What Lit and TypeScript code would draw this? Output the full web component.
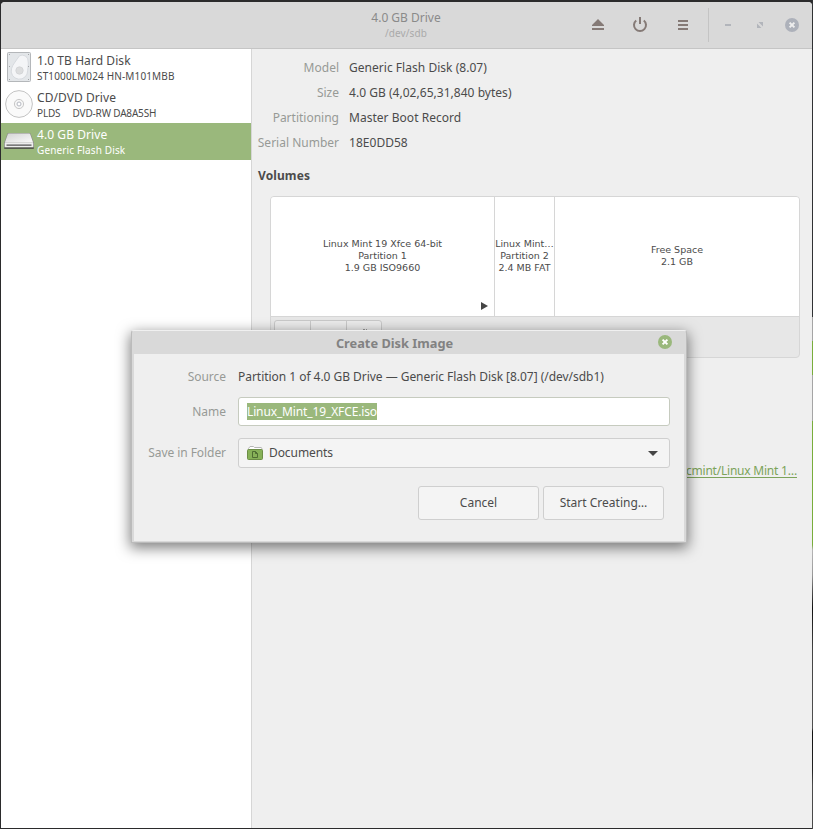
import { LitElement, html, css, svg } from "lit";
import { customElement } from "lit/decorators.js";

const hardDisk = svg`<svg width="36" height="37" viewBox="0 0 36 37">
  <rect x="6.5" y="3.5" width="23" height="29" rx="1" fill="#e3e6e9" stroke="#b4b7ba"/>
  <path d="M18.500 6.800Q21 5.300 24.500 7Q27.500 9 27.300 14Q27.200 18 26.600 21.500A8.200 8.200 0 1 1 10.600 19.500Q11.500 16.500 13.500 13.800Z" fill="#f4f5f7" stroke="#d0d4d9" stroke-width=".8"/>
  <circle cx="18.500" cy="21.500" r="3.700" fill="#dcddde" stroke="#d0d2d4" stroke-width=".8"/>
  <g fill="#a2a5a8"><rect x="8" y="5" width="1" height="1"/><rect x="27" y="5" width="1" height="1"/><rect x="8" y="17" width="1" height="1"/><rect x="27" y="17" width="1" height="1"/><rect x="8" y="30" width="1" height="1"/><rect x="27" y="30" width="1" height="1"/></g>
</svg>`;

const disc = svg`<svg width="36" height="37" viewBox="0 0 36 37">
  <circle cx="18" cy="18" r="13.400" fill="#fafafa" stroke="#c4c4c4"/>
  <circle cx="18" cy="18" r="4.600" fill="#f6f6f6" stroke="#c8c8c8"/>
  <circle cx="18" cy="18" r="2" fill="#fff" stroke="#b5b9c2"/>
</svg>`;

const usbDrive = svg`<svg width="36" height="37" viewBox="0 0 36 37">
  <defs><linearGradient id="lid" x1="0" y1="0" x2="1" y2="1"><stop offset="0" stop-color="#d4d4d4"/><stop offset="1" stop-color="#fafafa"/></linearGradient></defs>
  <path d="M3 19.500h30v5.500q0 1-1 1H4q-1 0-1-1z" fill="#55594f"/>
  <path d="M7.500 10h21q1 0 1.300 1L33 20v4q0 .8-.8.800H3.800Q3 24.800 3 24v-4l3.200-9q.3-1 1.300-1z" fill="#8b8d87"/>
  <path d="M7.800 10.600h20.400q.8 0 1 .7l2.900 8.200H3.900l2.900-8.200q.2-.7 1-.7z" fill="url(#lid)"/>
  <path d="M3.800 19.500h28.400v4.500H3.800z" fill="#ededed"/>
  <path d="M5.500 21.500h25v1.300h-25z" fill="#555"/>
</svg>`;

interface Drive { name: string; detail: string; icon: unknown; kind: string }

const drives: Drive[] = [
  { name: "1.0 TB Hard Disk", detail: "ST1000LM024 HN-M101MBB", icon: hardDisk, kind: "disk" },
  { name: "CD/DVD Drive", detail: "PLDS\u00a0\u00a0\u00a0\u00a0 DVD-RW DA8A5SH", icon: disc, kind: "optical" },
  { name: "4.0 GB Drive", detail: "Generic Flash Disk", icon: usbDrive, kind: "active" },
];

const details: [string, string][] = [
  ["Model", "Generic Flash Disk (8.07)"],
  ["Size", "4.0 GB (4,02,65,31,840 bytes)"],
  ["Partitioning", "Master Boot Record"],
  ["Serial Number", "18E0DD58"],
];

@customElement("drive-list")
class DriveList extends LitElement {
  static styles = css`
    :host { display: block; width: 250px; background: #fff; border-right: 1px solid #d6d6d6; }
    .row { display: flex; height: 37px; color: #4b4b4b; }
    .row.active { background: #9ab87c; color: #fff; }
    .icon { width: 36px; height: 37px; flex: none; }
    .text { padding-top: 3px; white-space: nowrap; }
    .name { font-size: 12px; line-height: 17px; letter-spacing: .07px; }
    .detail { font-size: 10px; line-height: 14px; letter-spacing: .14px; }
    .optical .detail { letter-spacing: -.17px; }
    svg { display: block; }
  `;
  render() {
    return drives.map((d) => html`<div class="row ${d.kind}">
      <div class="icon">${d.icon}</div>
      <div class="text"><div class="name">${d.name}</div><div class="detail">${d.detail}</div></div>
    </div>`);
  }
}

@customElement("image-dialog")
class ImageDialog extends LitElement {
  static styles = css`
    :host { display: block; box-sizing: border-box; width: 556px; height: 213px; border: 1px solid #bbb; border-top-color: #f0f0f0; border-radius: 3px 3px 0 0;
      background: #d9d9d9; box-shadow: 0 4px 14px 1px rgba(0,0,0,.5); padding: 0 2px 2px; color: #4b4b4b; font-size: 12px; }
    .title { display: flex; align-items: flex-start; height: 23px; color: #828282; font-weight: 700; font-size: 12.8px; }
    .title span { flex: 1; text-align: center; line-height: 17px; padding-top: 4px; margin-right: 3px; }
    .close { width: 14px; height: 14px; margin: 4px 12px 0 0; display: block; }
    .body { height: 187px; background: #efefef; box-sizing: border-box; padding: 0 14px; display: flex; flex-direction: column; }
    .line { display: flex; align-items: center; white-space: nowrap; }
    .label { width: 78px; margin-right: 12px; text-align: right; color: #979a96; flex: none; }
    .source { height: 30px; margin-top: 7px; letter-spacing: -.035px; }
    .name { margin-top: 6px; height: 29px; }
    .folder { margin-top: 12px; height: 30px; }
    .folder .label, .combo span, .btn span { position: relative; top: -1px; }
    .folder .label { letter-spacing: -.06px; }
    .field, .combo { flex: 1; height: 100%; box-sizing: border-box; border: 1px solid #cfcfcf; border-radius: 3px; display: flex; align-items: center; padding: 0 8px; }
    .field { background: #fff; border-color: #c6cbbf; }
    .sel { background: #9ab87c; color: #fff; height: 17px; line-height: 17px; letter-spacing: -.13px; }
    .combo { background: #f4f4f4; }
    .combo span { flex: 1; margin-left: 6px; letter-spacing: -.08px; }
    .combo .arrow { margin-right: 3px; }
    .actions { display: flex; justify-content: flex-end; gap: 4px; margin: 18px 6px 0 0; }
    .btn { box-sizing: border-box; width: 121px; height: 34px; border: 1px solid #cfcfcf; border-radius: 3px; background: #f4f4f4; display: flex; align-items: center; justify-content: center; }
    svg { display: block; }
  `;
  render() {
    return html`
      <div class="title"><span>Create Disk Image</span>
        <svg class="close" viewBox="0 0 14 14"><circle cx="7" cy="7" r="7" fill="#9ab87c"/><path d="M4.600 4.600l4.800 4.800M9.400 4.600l-4.800 4.800" stroke="#fff" stroke-width="2"/></svg>
      </div>
      <div class="body">
        <div class="line source"><div class="label">Source</div>Partition 1 of 4.0 GB Drive — Generic Flash Disk [8.07] (/dev/sdb1)</div>
        <div class="line name"><div class="label">Name</div><div class="field"><div class="sel">Linux_Mint_19_XFCE.iso</div></div></div>
        <div class="line folder"><div class="label">Save in Folder</div><div class="combo">
          <svg width="16" height="16" viewBox="0 0 16 16">
            <path d="M1.500 5V3.500L3 1.500h3.500l1 1H14q.8 0 .8 1V5z" fill="#fff" stroke="#b7b7b7"/>
            <rect x=".5" y="4.500" width="15" height="10" rx="1" fill="#87b158" stroke="#6c8e46"/>
            <path d="M5.500 6.500h3l2 2v4h-5zM8.500 6.500v2h2" fill="none" stroke="#4f6d33"/>
          </svg>
          <span>Documents</span>
          <svg class="arrow" width="10" height="5" viewBox="0 0 10 5"><path d="M0 0h10L5 5z" fill="#454545"/></svg>
        </div></div>
        <div class="actions"><div class="btn"><span>Cancel</span></div><div class="btn"><span>Start Creating…</span></div></div>
      </div>`;
  }
}

@customElement("app-root")
class AppRoot extends LitElement {
  static styles = css`
    :host { display: block; position: relative; width: 813px; height: 829px; box-sizing: border-box; padding: 2px 1px 1px; overflow: hidden;
      font-family: "Noto Sans", sans-serif; font-size: 12px; color: #4b4b4b;
      background: linear-gradient(#303234 0 317px, #a5a5a5 317px 341px, #79ad3b 341px 375px, #a5a5a5 375px 421px, #79ad3b 421px 545px, #b5b5b5 550px, #999 575px, #555 590px, #111 608px, #444 650px, #505050 728px, #111 732px, #222 770px, #4a4a4a 785px) right / 1px 100% no-repeat, #2b2b2c; }
    .window { height: 826px; display: flex; flex-direction: column; background: #efefef; border-radius: 4px 4px 0 0; overflow: hidden; }
    .header { height: 46px; border-bottom: 1px solid #c5c5c5; background: #d9d9d9; display: grid; grid-template-columns: 240px 1fr 240px; }
    .heading { grid-column: 2; text-align: center; padding: 7px 1px 0 0; color: #8a8a8a; }
    .heading .main { line-height: 18px; }
    .heading .sub { font-size: 10px; line-height: 13px; color: #aaa; letter-spacing: .1px; }
    .tools svg { display: block; }
    .content { flex: 1; display: flex; }
    .main-pane { flex: 1; padding: 6px 12px 0 6px; }
    .info { display: grid; grid-template-columns: 81px auto; column-gap: 10px; grid-auto-rows: 25px; align-items: center; white-space: nowrap; letter-spacing: .03px; }
    .info .label { justify-self: end; color: #979a96; letter-spacing: 0; }
    .volumes { font-weight: 700; height: 25px; line-height: 25px; margin-top: 8px; letter-spacing: .1px; }
    .map { margin: 8px 0 0 12px; width: 530px; height: 162px; box-sizing: border-box; border: 1px solid #d6d6d6; border-radius: 4px; background: #e7e7e7; overflow: hidden; }
    .parts { display: flex; height: 119px; border-bottom: 1px solid #d6d6d6; background: #fff; font: 9.5px/12px "DejaVu Sans", sans-serif; text-align: center; white-space: nowrap; }
    .part { display: flex; flex-direction: column; justify-content: center; box-sizing: border-box; position: relative; padding-bottom: 1px; }
    .first { width: 224px; border-right: 1px solid #d6d6d6; }
    .second { width: 60px; border-right: 1px solid #d6d6d6; }
    .free { flex: 1; }
    .play { position: absolute; right: 6px; bottom: 6px; }
    .toolbar { display: flex; margin: 3px 0 0 3px; width: 108px; height: 32px; box-sizing: border-box; border: 1px solid #c9c9c9; border-radius: 3px; background: #ececec; }
    .toolbar div { width: 35px; flex: none; border-left: 1px solid #c9c9c9; }
    .toolbar div:first-child { border-left: 0; }
    .gears { display: block; margin: 5px auto; }
    .link { text-align: right; margin-top: 104px; padding-right: 3px; line-height: 18px; color: #7ca35a; letter-spacing: -.22px; }
    .link span { text-decoration: underline; text-underline-offset: 2px; }
    image-dialog { position: absolute; left: 131px; top: 330px; }
  `;
  render() {
    return html`
      <div class="window">
        <div class="header">
          <div class="heading"><div class="main">4.0 GB Drive</div><div class="sub">/dev/sdb</div></div>
          <div class="tools"><svg width="240" height="46" viewBox="572 2 240 46">
            <g fill="#857a76"><path d="M598 19l6 6v1h-12v-1zM592 28h12v2h-12zM678 20h10v2h-10zM678 24h10v2h-10zM678 28h10v2h-10zM639 17h2v7h-2z"/></g>
            <path d="M636.200 20.400A6 6 0 1 0 643.800 20.400" fill="none" stroke="#857a76" stroke-width="2"/>
            <path d="M708.500 8v34" stroke="#c4c4c4"/>
            <path d="M725 24h6v2h-6zM758.500 22h4.500v4.500zM757 23.500l4.500 4.500h-4.500z" fill="#b2b5bb"/>
            <circle cx="792" cy="25" r="7" fill="#adb1ba"/>
            <path d="M789.600 22.600l4.800 4.800M794.400 22.600l-4.800 4.800" stroke="#eee" stroke-width="2"/>
          </svg></div>
        </div>
        <div class="content">
          <drive-list></drive-list>
          <div class="main-pane">
            <div class="info">${details.map(([k, v]) => html`<div class="label">${k}</div><div>${v}</div>`)}</div>
            <div class="volumes">Volumes</div>
            <div class="map">
              <div class="parts">
                <div class="part first"><div>Linux Mint 19 Xfce 64-bit</div><div>Partition 1</div><div>1.9 GB ISO9660</div>
                  <svg class="play" width="7" height="8" viewBox="0 0 7 8"><path d="M0 0l7 4-7 4z" fill="#454545"/></svg></div>
                <div class="part second"><div>Linux Mint…</div><div>Partition 2</div><div>2.4 MB FAT</div></div>
                <div class="part free"><div>Free Space</div><div>2.1 GB</div></div>
              </div>
              <div class="toolbar"><div></div><div></div><div><svg class="gears" width="10" height="8" viewBox="0 0 10 8"><path d="M3 3h2v1h-2zM6 3h1v1h-1z" fill="#999"/></svg></div></div>
            </div>
            <div class="link"><span>cmint/Linux Mint 1…</span></div>
          </div>
        </div>
      </div>
      <image-dialog></image-dialog>`;
  }
}
